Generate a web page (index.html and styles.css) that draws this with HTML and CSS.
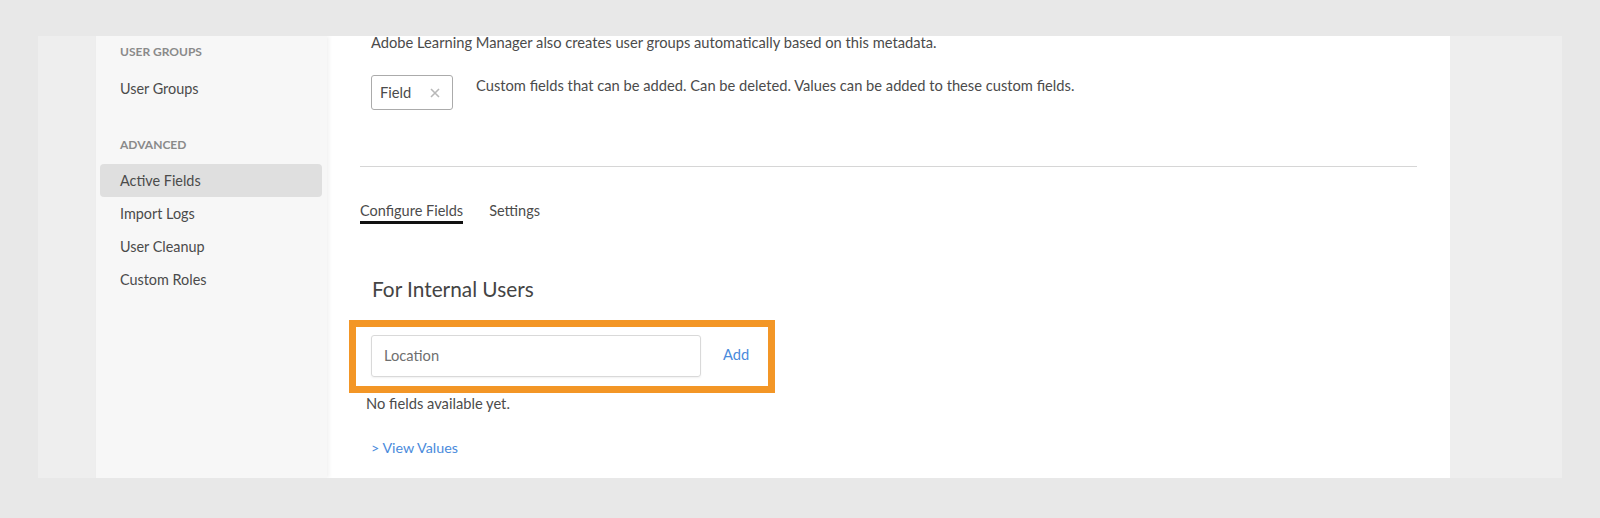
FILE: index.html
```html
<!DOCTYPE html>
<html>
<head>
<meta charset="utf-8">
<link rel="stylesheet" href="styles.css">
</head>
<body>
<div class="frame">
  <div class="gutter"></div>
  <nav class="sidebar">
    <div class="nav-heading">USER GROUPS</div>
    <div class="nav-item first">User Groups</div>
    <div class="nav-heading second">ADVANCED</div>
    <div class="nav-item active">Active Fields</div>
    <div class="nav-item">Import Logs</div>
    <div class="nav-item">User Cleanup</div>
    <div class="nav-item">Custom Roles</div>
  </nav>
  <main class="main">
    <p class="intro">Adobe Learning Manager also creates user groups automatically based on this metadata.</p>
    <div class="chip-row">
      <div class="chip"><span>Field</span><svg class="chip-x" width="10" height="10" viewBox="0 0 10 10"><path d="M1 1L9 9M9 1L1 9" stroke="#b8b8b8" stroke-width="1.6" fill="none"/></svg></div>
      <p class="chip-desc">Custom fields that can be added. Can be deleted. Values can be added to these custom fields.</p>
    </div>
    <hr class="divider">
    <div class="tabs">
      <span class="tab active">Configure Fields</span>
      <span class="tab">Settings</span>
    </div>
    <h2 class="section-title">For Internal Users</h2>
    <div class="highlight">
      <div class="input">Location</div>
      <a class="add">Add</a>
    </div>
    <p class="empty">No fields available yet.</p>
    <a class="view">&gt; View Values</a>
  </main>
  <div class="rightbar"></div>
</div>
</body>
</html>
```
FILE: styles.css
```css
* { box-sizing: border-box; }
body { margin: 0; background: #e8e8e8; font-family: "Lato", sans-serif; color: #4b4b4b; }
.frame { margin: 36px 38px 0; height: 442px; display: flex; background: #eeeeee; overflow: hidden; }
.gutter { width: 58px; flex: none; }
.rightbar { width: 112px; flex: none; }
.sidebar { width: 231px; flex: none; background: #f7f7f7; padding: 6px 5px 0 4px; box-shadow: 2px 0 4px rgba(0,0,0,0.06); position: relative; z-index: 1; }
.nav-heading { height: 20px; line-height: 20px; padding-left: 20px; font-size: 12px; font-weight: 700; color: #8a8a8a; }
.nav-heading.second { margin-top: 30px; margin-bottom: 9px; }
.nav-item { height: 33px; line-height: 33px; padding-left: 20px; font-size: 14.4px; color: #4b4b4b; border-radius: 4px; }
.nav-item.first { margin-top: 10px; }
.nav-item.active { background: #dfdfdf; }
.main { flex: 1; background: #fff; padding: 0 33px; }
.intro { margin: -4px 0 0 11px; font-size: 14.7px; line-height: 20px; }
.chip-row { display: flex; margin: 23px 0 0 11px; }
.chip { flex: none; width: 82px; height: 35px; border: 1px solid #ababab; border-radius: 3px; display: flex; align-items: center; justify-content: space-between; padding: 0 12px 2px 8px; font-size: 14.7px; }
.chip-x { margin-top: 2px; }
.chip-desc { margin: 0 0 0 23px; font-size: 14.7px; line-height: 20px; }
.divider { border: 0; border-top: 1px solid #d6d6d6; margin: 56px 0 0; }
.tabs { display: flex; gap: 26px; margin-top: 34px; font-size: 14.5px; }
.tab { line-height: 20px; }
.tab.active { border-bottom: 3px solid #111; }
.section-title { margin: 52px 0 0 12px; font-size: 20.8px; font-weight: 400; line-height: 26px; color: #444; }
.highlight { display: flex; align-items: flex-start; width: 426px; height: 73px; margin: 18px 0 0 -11px; border: 7px solid #f39626; padding: 8px 0 0 15px; }
.input { width: 330px; height: 42px; border: 1px solid #d9d9d9; border-radius: 3px; box-shadow: 0 1px 2px rgba(0,0,0,0.06); padding-left: 12px; line-height: 39px; font-size: 14.7px; color: #6f6f6f; }
.add { margin-left: 22px; line-height: 39px; font-size: 14.7px; color: #4a8bdc; }
.empty { margin: 0 0 0 6px; font-size: 14.7px; line-height: 20px; }
.view { display: block; margin: 25px 0 0 11px; font-size: 14.3px; line-height: 20px; color: #4a8bdc; }
```
